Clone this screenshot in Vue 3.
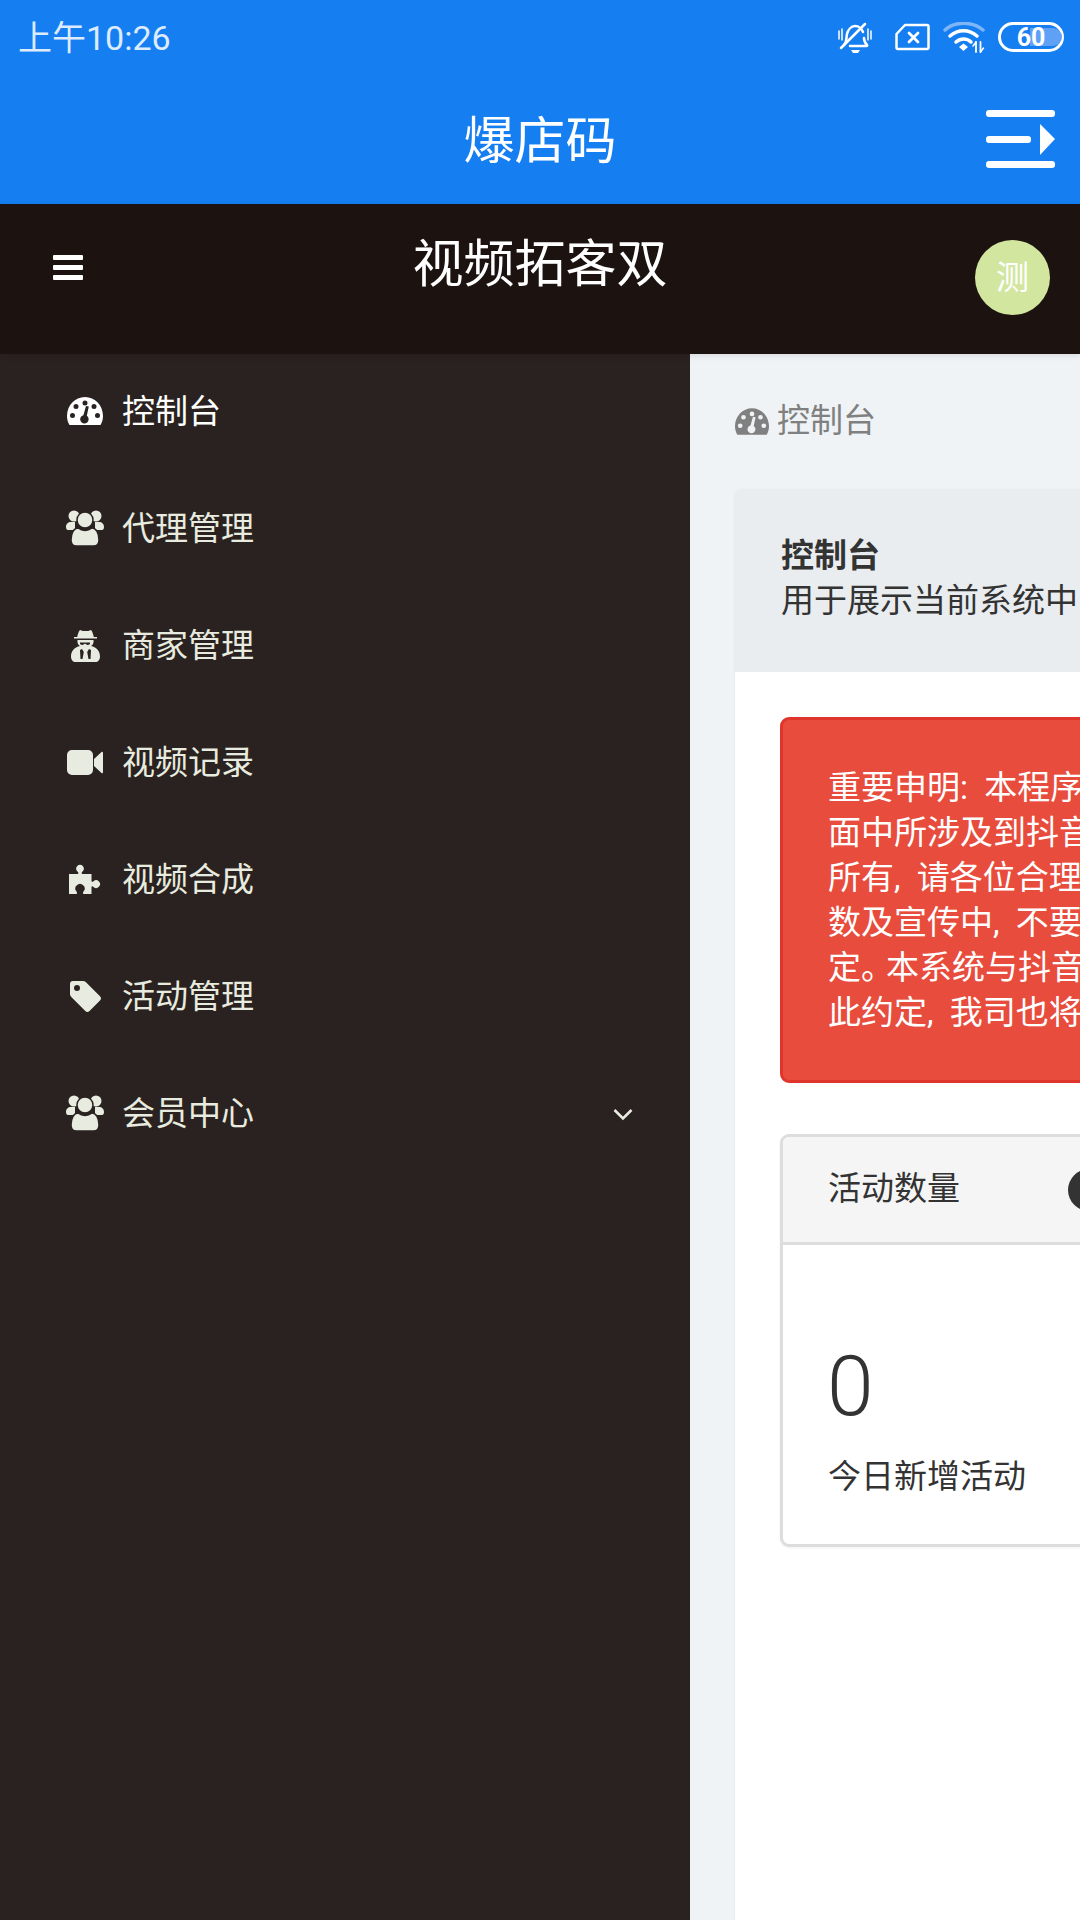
<script setup>
const menus = [
  { icon: 'i-dash', label: '控制台', w: 36, h: 28, active: true },
  { icon: 'i-users', label: '代理管理', w: 38, h: 36 },
  { icon: 'i-spy', label: '商家管理', w: 29, h: 33 },
  { icon: 'i-video', label: '视频记录', w: 36, h: 25 },
  { icon: 'i-puzzle', label: '视频合成', w: 33, h: 31 },
  { icon: 'i-tag', label: '活动管理', w: 31, h: 31 },
  { icon: 'i-users', label: '会员中心', w: 38, h: 36, arrow: true }
]

// 公告文字，右侧被屏幕裁掉
const notice = [
  '重要申明: 本程序',
  '面中所涉及到抖音',
  '所有, 请各位合理',
  '数及宣传中, 不要',
  '定。本系统与抖音',
  '此约定, 我司也将'
]
</script>

<template>
  <div class="page">
    <svg class="defs" width="0" height="0">
      <symbol id="i-dash" viewBox="0 0 36 28">
        <path fill="currentColor" fill-rule="evenodd" d="M2.5 28C1 25.5 0 22.5 0 19 0 8.5 8 0 18 0s18 8.500 18 19c0 3.500-1 6.500-2.500 9ZM18 3.500a2.500 2.500 0 1 0 0 5 2.500 2.500 0 0 0 0-5ZM9 7a2.500 2.500 0 1 0 0 5 2.500 2.500 0 0 0 0-5Zm18 0a2.500 2.500 0 1 0 0 5 2.500 2.500 0 0 0 0-5ZM5.500 16a2.500 2.500 0 1 0 0 5 2.500 2.500 0 0 0 0-5Zm25 0a2.500 2.500 0 1 0 0 5 2.500 2.500 0 0 0 0-5ZM19 9l-2.600 9.200a4.200 4.200 0 1 0 3.400.6L21.800 9.600Z" />
      </symbol>
      <symbol id="i-users" viewBox="0 0 38 36">
        <g fill="currentColor">
          <circle cx="8" cy="6" r="5.500" />
          <circle cx="30" cy="6" r="5.500" />
          <path d="M0 17c0-3 2-5 5-5h4v8H2c-1.200 0-2-1-2-3Zm38 0c0-3-2-5-5-5h-4v8h7c1.200 0 2-1 2-3Z" />
          <circle cx="19" cy="10" r="8" stroke="#2a2220" stroke-width="1.500" />
          <path d="M5 30c0-7 3-12 7-12 2 1.500 4.500 2.500 7 2.500s5-1 7-2.500c4 0 7 5 7 12 0 4-2.500 6-5.500 6h-17C7.500 36 5 34 5 30Z" stroke="#2a2220" stroke-width="1.500" />
        </g>
      </symbol>
      <symbol id="i-spy" viewBox="0 0 29 33">
        <path fill="currentColor" fill-rule="evenodd" d="M9 1c2 1 3.500 1 5.500 1S18 2 20 1c1.500 1.500 2 4 2.800 7H26v1.500H3V8h3.200C7 5 7.500 2.500 9 1ZM6.500 11h16c.5 2-.5 5-2.500 6l2 .5c4 1.500 7 5 7 10 0 3.500-2 5.500-4.500 5.500h-20C2 33 0 31 0 27.500c0-5 3-8.500 7-10l2-.5c-2-1-3-4-2.500-6ZM9 13.500v1.500c2 1.500 3.500 1 5-.5 1.500 1.500 3 2 5 .5v-1.500Zm2 6.500 1.800 3-1.300 7h-2L9 21Zm7 0 2 1-.5 9h-2l-1.300-7Z" />
      </symbol>
      <symbol id="i-video" viewBox="0 0 36 25">
        <path fill="currentColor" d="M5 0h16a5 5 0 0 1 5 5v15a5 5 0 0 1-5 5H5a5 5 0 0 1-5-5V5a5 5 0 0 1 5-5Zm22 9 7.500-7c.6-.5 1.500-.2 1.500.7v19.600c0 .9-.9 1.200-1.500.7L27 16Z" />
      </symbol>
      <symbol id="i-puzzle" viewBox="0 0 33 31">
        <path fill="currentColor" d="M0 10H8.500C9.500 10 9.500 9 9 8A3.900 3.900 0 1 1 13 8C12.500 9 12.500 10 13.500 10H22.500V17C22.500 18 23.500 18 24.500 17.200A3.900 3.900 0 1 1 24.500 23C23.500 22 22.500 22 22.500 23.500V30H15C14 30 13.500 29 14.500 27.500A4.600 4.600 0 1 0 7.500 27.500C8.500 29 8 30 7 30H0Z" />
      </symbol>
      <symbol id="i-tag" viewBox="0 0 31 31">
        <path fill="currentColor" fill-rule="evenodd" d="M3 0h10c1 0 2 .4 3 1.300l14 14c1.300 1.300 1.300 3 0 4.300L19.500 30c-1.300 1.300-3 1.300-4.200 0L1.300 16C.4 15 0 14 0 13V3a3 3 0 0 1 3-3Zm4 4a3 3 0 1 0 0 6 3 3 0 0 0 0-6Z" />
      </symbol>
    </svg>

    <header class="topbar">
      <div class="status">
        <span class="time">上午10:26</span>
        <div class="status-icons">
          <svg width="34" height="33" viewBox="0 0 34 33" fill="none" stroke="#fff" stroke-width="2.500" stroke-linecap="round">
            <path d="M6 24c3-3 2-6 3-11 1-4 4-8 8-8s7 3 8 6m1 6c0 3 1 5 3 7 .5.600.2 1-.5 1H12" />
            <path d="M27 3 3 27" />
            <path d="M1 10v8M4 8v11M30 8v11M33 10v8" stroke-width="1.500" />
            <path d="M13 29h9l-2 3h-5Z" fill="#fff" stroke="none" />
          </svg>
          <svg class="sim" width="35" height="28" viewBox="0 0 35 28" fill="none" stroke="#fff" stroke-width="2.500" stroke-linejoin="round" stroke-linecap="round">
            <path d="M10 2h22a1.500 1.500 0 0 1 1.500 1.500v21a1.500 1.500 0 0 1-1.500 1.500H3a1.500 1.500 0 0 1-1.500-1.500V11Z" />
            <path d="m14 10 9 9m0-9-9 9" stroke-width="2.800" />
          </svg>
          <svg class="wifi" width="42" height="31" viewBox="0 0 42 31" fill="none" stroke="#fff" stroke-linecap="round">
            <path d="M2 8C12-1 29-1 40 8" stroke="#7db5f8" stroke-width="3.500" />
            <path d="M7 14c8-7 19-7 27 0M13 20c4.500-4 11-4 15 0" stroke-width="3.500" />
            <path d="m16 25 4.500-3.500L25 25l-4.500 4Z" fill="#fff" stroke="none" />
            <path d="M33 20v10M37.500 20v10" stroke-width="1.800" />
            <path d="m33 20-3 4m7.500 6 3-4" stroke-width="1.500" />
          </svg>
          <svg width="66" height="30" viewBox="0 0 66 30" fill="none">
            <rect x="1.500" y="1.500" width="63" height="27" rx="13.500" stroke="#fff" stroke-width="3" />
            <path d="M32 6h23a9 9 0 0 1 0 18H32Z" fill="#5ea1f6" />
            <text x="33" y="24" class="batt" text-anchor="middle">60</text>
          </svg>
        </div>
      </div>
      <div class="brand">
        <span />
        <h1>爆店码</h1>
        <svg class="nav-toggle" width="69" height="58" viewBox="0 0 69 58" fill="#fff">
          <rect width="69" height="7" rx="3" />
          <rect y="26" width="45" height="7" rx="3" />
          <path d="M54 14l15 15-15 16Z" />
          <rect y="51" width="69" height="7" rx="3" />
        </svg>
      </div>
    </header>

    <nav class="navbar">
      <div class="burger"><i /><i /><i /></div>
      <div class="nav-title">视频拓客双</div>
      <div class="avatar">测</div>
    </nav>

    <div class="main">
      <aside class="sidebar">
        <a v-for="m in menus" :key="m.label" class="menu-item" :class="{ active: m.active }">
          <span class="menu-icon">
            <svg :width="m.w" :height="m.h"><use :href="'#' + m.icon" /></svg>
          </span>
          <span class="menu-label">{{ m.label }}</span>
          <svg v-if="m.arrow" class="chevron" width="20" height="13" viewBox="0 0 20 13" fill="none" stroke="currentColor" stroke-width="2.600">
            <path d="m1.500 2 8.500 8.500L18.500 2" />
          </svg>
        </a>
      </aside>

      <main class="content">
        <div class="crumb">
          <svg width="34" height="27"><use href="#i-dash" /></svg>
          <span class="crumb-text">控制台</span>
        </div>
        <section class="card">
          <div class="card-head">
            <strong>控制台</strong>
            <p>用于展示当前系统中</p>
          </div>
          <div class="card-body">
            <div class="alert">
              <div v-for="line in notice" :key="line" class="alert-line">
                <template v-for="(part, i) in line.split('。')" :key="i"><span v-if="i" class="stop">。</span>{{ part }}</template>
              </div>
            </div>
            <div class="stat">
              <div class="stat-head">
                <span class="stat-title">活动数量</span>
                <b class="badge" />
              </div>
              <div class="stat-body">
                <div class="stat-num">0</div>
                <div class="stat-text">今日新增活动</div>
              </div>
            </div>
          </div>
        </section>
      </main>
    </div>
  </div>
</template>

<style>
html, body {
  margin: 0;
  background: #eff3f6;
}
</style>

<style scoped>
.page {
  width: 1080px;
  height: 1920px;
  display: flex;
  flex-direction: column;
  overflow: hidden;
  font-family: Roboto, "Noto Sans CJK SC", sans-serif;
  font-size: 33px;
  color: #333;
}

.defs {
  display: none;
}

.topbar {
  height: 204px;
  flex: none;
  background: #157ef1;
  color: #fff;
}

.status {
  height: 74px;
  display: flex;
  align-items: center;
  justify-content: space-between;
  padding: 0 16px 0 18px;
}

.time {
  padding-bottom: 4px;
  font-size: 34px;
  color: #dcebfd;
}

.status-icons {
  display: flex;
  align-items: center;
}

.status-icons svg {
  display: block;
}

.sim {
  margin-left: 23px;
}

.wifi {
  margin: 0 13px 0 13px;
}

.batt {
  font-family: Roboto, sans-serif;
  font-size: 25px;
  font-weight: 700;
  fill: #fff;
}

.brand {
  height: 130px;
  display: grid;
  grid-template-columns: 1fr auto 1fr;
  align-items: center;
  padding: 0 25px;
}

.brand h1 {
  margin: 0;
  padding-top: 6px;
  font-size: 51px;
  font-weight: 400;
  line-height: 60px;
}

.nav-toggle {
  justify-self: end;
}

.navbar {
  height: 150px;
  flex: none;
  display: grid;
  grid-template-columns: 1fr auto 1fr;
  align-items: start;
  background: #1c1311;
  color: #fff;
  position: relative;
  box-shadow: 0 2px 6px rgba(0, 0, 0, 0.1);
}

.burger {
  width: 30px;
  margin: 51px 0 0 53px;
  display: flex;
  flex-direction: column;
  gap: 5px;
}

.burger i {
  display: block;
  height: 5px;
  background: #fff;
  border-radius: 1px;
}

.nav-title {
  margin-top: 31px;
  font-size: 51px;
  line-height: 60px;
}

.avatar {
  justify-self: end;
  width: 75px;
  height: 75px;
  margin: 36px 30px 0 0;
  border-radius: 50%;
  background: #d2e69f;
  font-size: 33px;
  line-height: 75px;
  text-align: center;
}

.main {
  flex: 1;
  display: flex;
  min-height: 0;
}

.sidebar {
  width: 690px;
  flex: none;
  background: #2a2220;
  color: #e8ebdf;
}

.menu-item {
  height: 117px;
  display: flex;
  align-items: center;
  padding: 0 57px 0 66px;
}

.menu-item.active {
  color: #fff;
}

.menu-icon {
  width: 38px;
  margin-right: 18px;
  padding-bottom: 3px;
  display: flex;
  justify-content: center;
}

.menu-icon svg {
  display: block;
}

.menu-label {
  flex: 1;
  padding-bottom: 7px;
  font-size: 33px;
}

.content {
  flex: 1;
  min-width: 0;
  overflow: hidden;
  padding-left: 45px;
  background: #eff3f6;
}

.crumb {
  height: 135px;
  display: flex;
  align-items: center;
  gap: 8px;
  color: #808080;
}

.crumb svg {
  display: block;
}

.crumb-text {
  padding-bottom: 7px;
}

.card {
  width: 900px;
  height: 1500px;
  background: #fff;
  border-radius: 6px 0 0 0;
  box-shadow: -1px 0 2px rgba(0, 0, 0, 0.04);
}

.card-head {
  height: 183px;
  box-sizing: border-box;
  padding: 44px 46px 0;
  background: #e9edf0;
  border-radius: 6px 0 0 0;
  line-height: 45px;
}

.card-head strong {
  display: block;
  font-weight: 700;
}

.card-head p {
  margin: 0;
  white-space: nowrap;
}

.card-body {
  padding: 45px;
}

.alert {
  height: 366px;
  box-sizing: border-box;
  padding: 45px;
  background: #e84c3d;
  border: 3px solid #e0352b;
  border-radius: 9px;
  color: #fff;
  line-height: 45px;
}

.alert-line {
  white-space: nowrap;
  word-spacing: 8px;
}

.stop {
  letter-spacing: -8px;
}

.stat {
  margin-top: 51px;
  height: 413px;
  box-sizing: border-box;
  border: 3px solid #ddd;
  border-radius: 9px;
  box-shadow: 0 1px 3px rgba(0, 0, 0, 0.06);
}

.stat-head {
  height: 108px;
  box-sizing: border-box;
  display: flex;
  align-items: center;
  padding-left: 45px;
  background: #f5f5f5;
  border-bottom: 3px solid #ddd;
  border-radius: 6px 6px 0 0;
}

.stat-title {
  padding-bottom: 7px;
}

.badge {
  width: 42px;
  height: 42px;
  margin-left: 108px;
  border-radius: 50%;
  background: #333;
}

.stat-body {
  padding: 92px 45px 0;
}

.stat-num {
  margin-left: -1px;
  font-size: 84px;
  font-weight: 300;
  line-height: 100px;
}

.stat-text {
  margin-top: 17px;
  line-height: 45px;
}
</style>
